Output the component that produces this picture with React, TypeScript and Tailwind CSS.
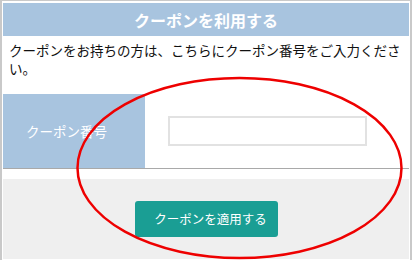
export default function App() {
  return (
    <div
      className="relative w-[412px] h-[260px] overflow-hidden bg-white"
      style={{ fontFamily: '"Noto Sans CJK JP", "Noto Sans", sans-serif' }}
    >
      <div className="h-full border-x-2 border-t border-[#c9c9c9] p-px flex flex-col">
        {/* header */}
        <div className="h-[33px] mt-px bg-[#a8c4df] flex items-center justify-center text-white font-bold text-[16px]">
          クーポンを利用する
        </div>

        {/* description */}
        <div className="h-[58px] px-[6px] pt-[5px] text-[13.5px] leading-[18px] text-[#111]">
          クーポンをお持ちの方は、こちらにクーポン番号をご入力ください。
        </div>

        {/* coupon row */}
        <div className="h-[75px] flex border-b border-[#a9a9a9]">
          <div className="w-[142px] bg-[#a8c4df] flex items-center justify-center pr-[15px] text-white text-[13.5px]">
            クーポン番号
          </div>
          <div className="flex-1 flex items-center pl-[23px]">
            <input
              type="text"
              className="w-[199px] h-[30px] border-2 border-[#e2e2e2] bg-white outline-none"
            />
          </div>
        </div>

        <div className="h-[10px] bg-white" />

        {/* button area */}
        <div className="flex-1 bg-[#efefef] flex justify-center pt-[22px]">
          <button className="h-[36px] w-[143px] rounded-[3px] bg-[#1a9e94] text-white text-[12.5px] pl-[9px] flex items-center justify-center">
            クーポンを適用する
          </button>
        </div>
      </div>

      {/* red annotation */}
      <svg className="absolute inset-0 pointer-events-none" width="412" height="260">
        <ellipse cx="239.5" cy="168" rx="162" ry="90" fill="none" stroke="#ee0000" strokeWidth="2.5" />
      </svg>
    </div>
  )
}
